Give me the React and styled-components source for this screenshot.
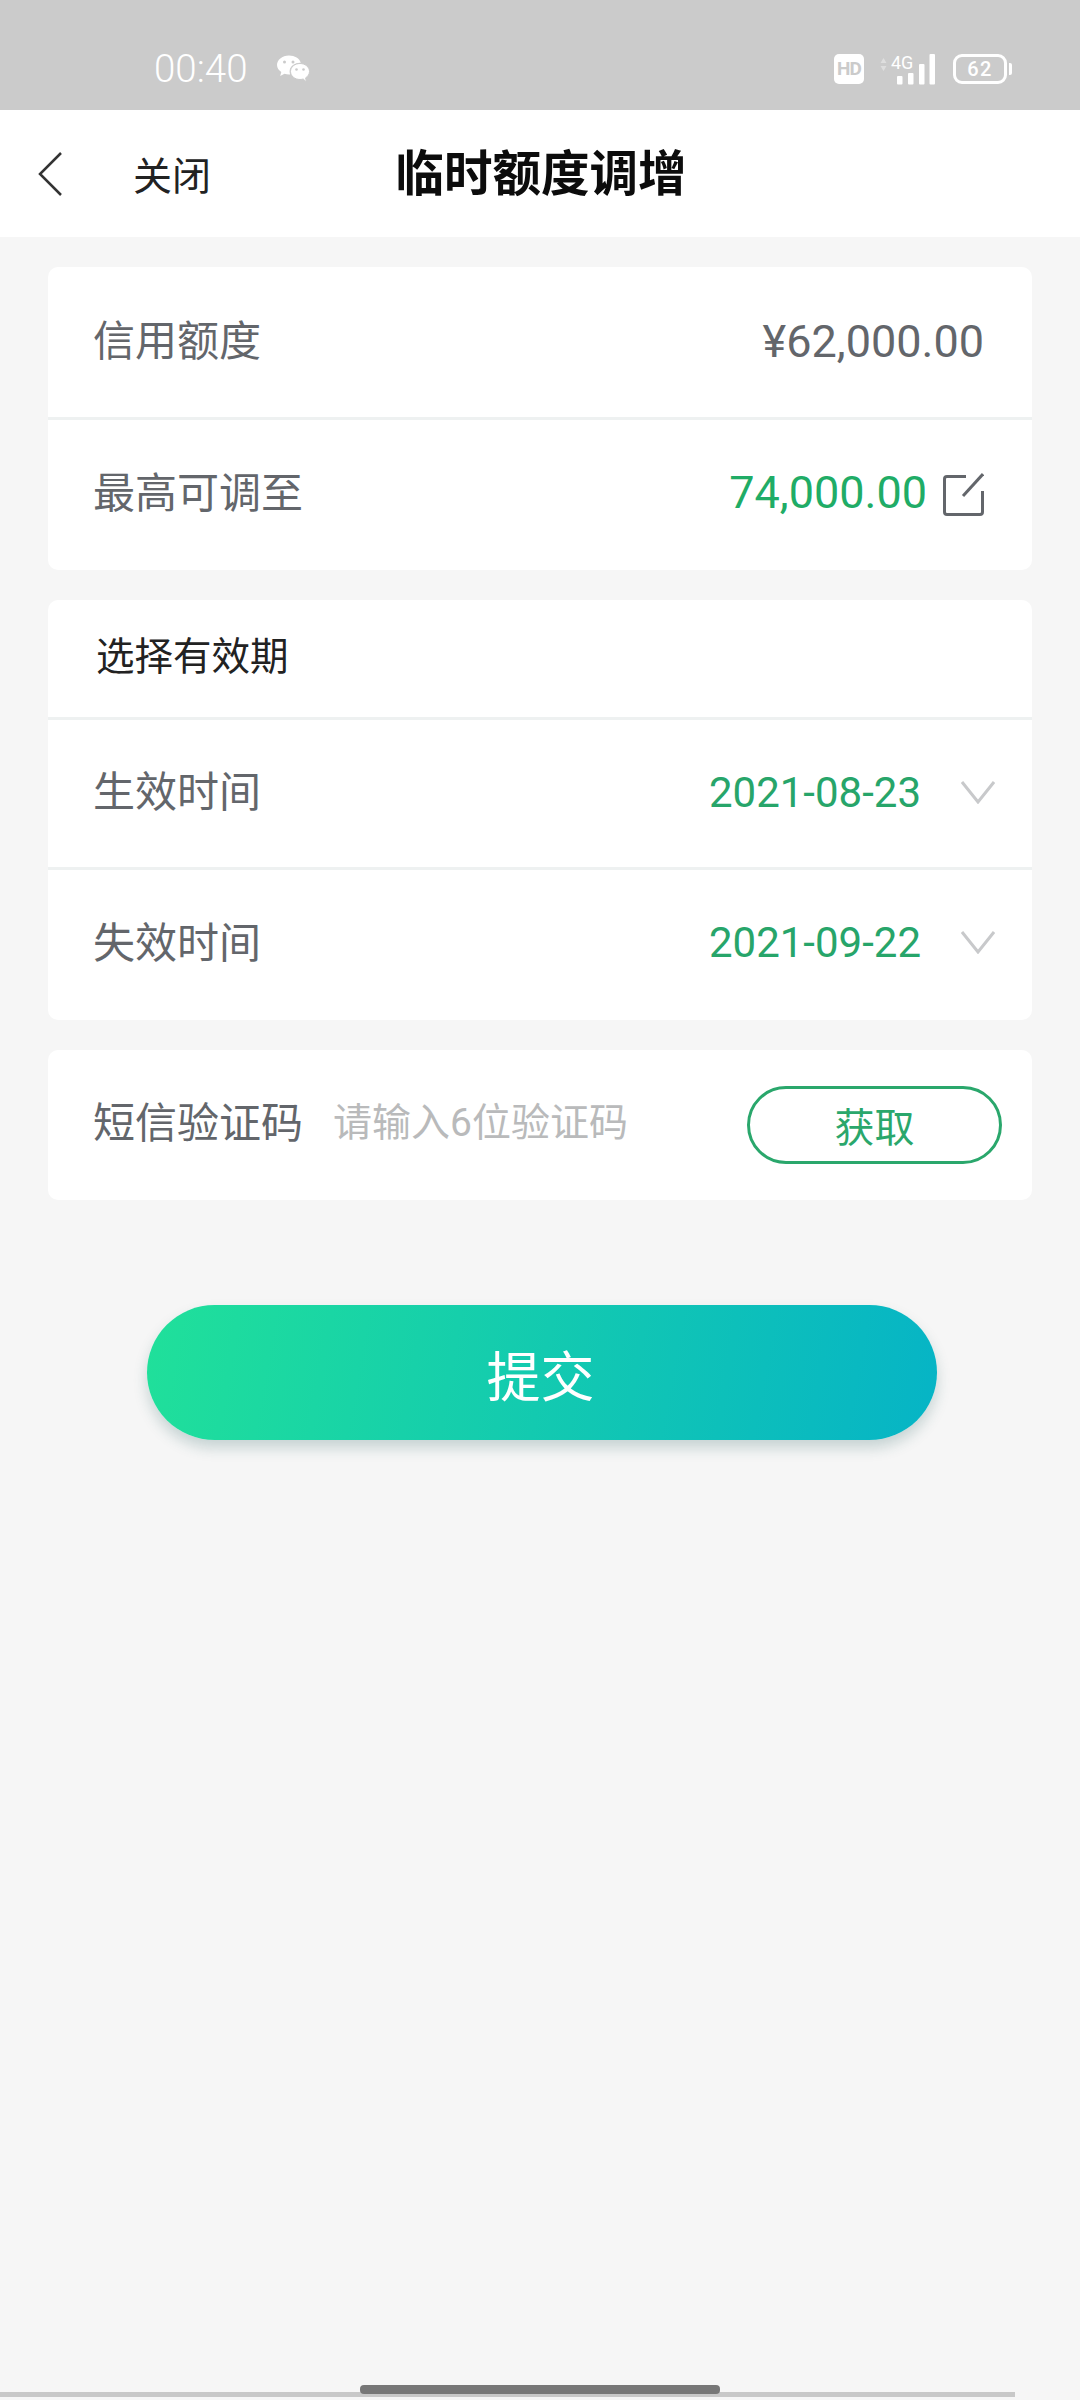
import styled, { createGlobalStyle } from "styled-components";

const GlobalStyle = createGlobalStyle`
  html, body {
    margin: 0;
    padding: 0;
    background: #f6f6f6;
  }
  * {
    box-sizing: border-box;
  }
`;

const FONT = `Roboto, "Noto Sans CJK SC", sans-serif`;

const WeChatIcon = () => (
  <svg width="34" height="28" viewBox="0 0 34 28">
    <path d="M13 0.500C6 0.500 1 5 1 10c0 3 1.700 5.300 4.300 7L4.200 21l4.300-2.200c1.400.4 2.900.7 4.500.7h1.200c-.4-1-.6-2-.6-3 0-5 4.800-8.800 10.400-8.800h.8C23.600 3.500 18.800 0.500 13 0.500z" fill="#fff" />
    <path d="M33.500 16.500c0-4.600-4.400-8-9.500-8s-9.500 3.400-9.500 8 4.400 8 9.500 8c1.100 0 2.200-.2 3.200-.5l3.300 3-.9-4.100c2.400-1.500 3.900-3.800 3.900-6.400z" fill="#fff" stroke="#cbcbcb" strokeWidth="1" />
    <circle cx="8.500" cy="7" r="1.500" fill="#cbcbcb" />
    <circle cx="17" cy="7" r="1.500" fill="#cbcbcb" />
    <circle cx="20.500" cy="14.500" r="1.300" fill="#cbcbcb" />
    <circle cx="27.500" cy="14.500" r="1.300" fill="#cbcbcb" />
  </svg>
);

const SignalIcon = () => (
  <svg width="55" height="42" viewBox="0 -6 55 42">
    <path d="M0.500 9l3-5 3 5zM0.500 12l3 5 3-5z" fill="#dedede" />
    <text x="11" y="15" fontFamily="Roboto, sans-serif" fontSize="18" fill="#fff">4G</text>
    <rect x="17" y="22" width="5.500" height="8.500" rx="1" fill="#fff" />
    <rect x="28" y="19" width="5.500" height="11.500" rx="1" fill="#fff" />
    <rect x="39" y="10" width="5.500" height="20.500" rx="1" fill="#fff" />
    <rect x="49.500" y="0" width="5.500" height="30.500" rx="1" fill="#fff" />
  </svg>
);

const BackIcon = () => (
  <svg width="26" height="46" viewBox="0 0 26 46">
    <path d="M24 2 L3 23 L24 44" fill="none" stroke="#333" strokeWidth="2.500" />
  </svg>
);

const EditIcon = () => (
  <svg width="41" height="43" viewBox="0 0 41 43">
    <path d="M23 3.500H4a2.500 2.500 0 0 0-2.500 2.500v33A2.500 2.500 0 0 0 4 41.500h33a2.500 2.500 0 0 0 2.500-2.500V18" fill="none" stroke="#63666b" strokeWidth="3" />
    <path d="M20 23 L40 1" fill="none" stroke="#63666b" strokeWidth="3" />
  </svg>
);

const ChevronIcon = () => (
  <svg width="34" height="23" viewBox="0 0 34 23">
    <path d="M1 1 L17 21 L33 1" fill="none" stroke="#c8c9cb" strokeWidth="3" />
  </svg>
);

export default function App() {
  return (
    <Page>
      <GlobalStyle />
      <StatusBar>
        <StatusLeft>
          <Clock>00:40</Clock>
          <WeChatIcon />
        </StatusLeft>
        <StatusRight>
          <HdBadge>HD</HdBadge>
          <SignalIcon />
          <Battery>
            <BatteryLevel>62</BatteryLevel>
            <BatteryCap />
          </Battery>
        </StatusRight>
      </StatusBar>

      <Header>
        <BackButton>
          <BackIcon />
        </BackButton>
        <CloseLink>关闭</CloseLink>
        <Title>临时额度调增</Title>
      </Header>

      <Content>
        <Card>
          <Row $height={153}>
            <Label>信用额度</Label>
            <Amount>¥62,000.00</Amount>
          </Row>
          <Row>
            <Label>最高可调至</Label>
            <RowEnd>
              <Amount $green>74,000.00</Amount>
              <EditSlot>
                <EditIcon />
              </EditSlot>
            </RowEnd>
          </Row>
        </Card>

        <Card>
          <SectionRow>选择有效期</SectionRow>
          <Row $chevron>
            <Label>生效时间</Label>
            <RowEnd $gap={40}>
              <DateValue>2021-08-23</DateValue>
              <ChevronIcon />
            </RowEnd>
          </Row>
          <Row $chevron>
            <Label>失效时间</Label>
            <RowEnd $gap={40}>
              <DateValue>2021-09-22</DateValue>
              <ChevronIcon />
            </RowEnd>
          </Row>
        </Card>

        <Card>
          <SmsRow>
            <Label>短信验证码</Label>
            <CodeInput placeholder="请输入6位验证码" />
            <GetButton>获取</GetButton>
          </SmsRow>
        </Card>
      </Content>

      <SubmitButton>提交</SubmitButton>

      <HomeTrack>
        <HomeBar />
      </HomeTrack>
    </Page>
  );
}

const Page = styled.div`
  position: relative;
  width: 1080px;
  height: 2400px;
  overflow: hidden;
  background: #f6f6f6;
  font-family: ${FONT};
`;

const StatusBar = styled.div`
  height: 110px;
  padding: 46px 69px 0 154px;
  background: #cbcbcb;
  display: flex;
  justify-content: space-between;
  align-items: flex-start;
`;

const StatusLeft = styled.div`
  display: flex;
  align-items: center;
  gap: 28px;
`;

const Clock = styled.span`
  font-size: 38.500px;
  line-height: 46px;
  font-weight: 300;
  color: #fff;
`;

const StatusRight = styled.div`
  display: flex;
  align-items: center;
  gap: 16px;
  height: 46px;
`;

const HdBadge = styled.span`
  width: 30px;
  height: 30px;
  border-radius: 5px;
  background: #fff;
  color: #cbcbcb;
  font-size: 19px;
  line-height: 30px;
  font-weight: 700;
  letter-spacing: -1px;
  text-align: center;
`;

const Battery = styled.div`
  position: relative;
  width: 54px;
  height: 30px;
  margin: 0 4px 0 2px;
  border: 3px solid #fff;
  border-radius: 9px;
  display: flex;
  align-items: center;
  justify-content: center;
`;

const BatteryLevel = styled.span`
  font-size: 20px;
  font-weight: 500;
  letter-spacing: 1.500px;
  color: #fff;
`;

const BatteryCap = styled.span`
  position: absolute;
  right: -8px;
  top: 6px;
  width: 3px;
  height: 12px;
  border-radius: 0 2px 2px 0;
  background: #fff;
`;

const Header = styled.header`
  position: relative;
  height: 127px;
  background: #fff;
  display: flex;
  align-items: center;
  padding-left: 37px;
`;

const BackButton = styled.span`
  display: flex;
  width: 96px;
`;

const CloseLink = styled.span`
  margin-bottom: 2px;
  font-size: 39px;
  color: #222;
`;

const Title = styled.h1`
  position: absolute;
  left: 0;
  right: 0;
  top: 0;
  margin: 0;
  padding-left: 2px;
  line-height: 130px;
  text-align: center;
  font-size: 48.500px;
  font-weight: 700;
  color: #0c0c0c;
`;

const Content = styled.main`
  display: flex;
  flex-direction: column;
  gap: 30px;
  padding: 30px 48px 0 48px;
`;

const Card = styled.section`
  background: #fff;
  border-radius: 10px;
  overflow: hidden;
`;

const Row = styled.div`
  height: ${({ $height = 150 }) => $height}px;
  padding: 0 ${({ $chevron }) => ($chevron ? "37px" : "48px")} 2px 45px;
  display: flex;
  align-items: center;
  justify-content: space-between;
  border-bottom: 3px solid #eef1f1;

  &:last-child {
    padding-bottom: 5px;
    border-bottom: none;
  }

  &:last-child > span:first-child {
    margin-bottom: 6px;
  }
`;

const SectionRow = styled.div`
  height: 120px;
  padding: 0 0 11px 48px;
  display: flex;
  align-items: center;
  font-size: 38.500px;
  color: #222;
  border-bottom: 3px solid #eef1f1;
`;

const Label = styled.span`
  margin-bottom: 8px;
  font-size: 42px;
  color: #63666b;
  white-space: nowrap;
`;

const RowEnd = styled.div`
  display: flex;
  align-items: center;
  gap: ${({ $gap = 16 }) => $gap}px;
`;

const EditSlot = styled.span`
  display: flex;
  margin-top: 3px;
`;

const Amount = styled.span`
  font-size: 45px;
  color: ${({ $green }) => ($green ? "#20ac66" : "#63666b")};
`;

const DateValue = styled.span`
  font-size: 42px;
  color: #27a56a;
`;

const SmsRow = styled.div`
  height: 150px;
  padding: 0 30px 4px 45px;
  display: flex;
  align-items: center;
`;

const CodeInput = styled.input`
  flex: 1;
  min-width: 0;
  margin-left: 30px;
  border: none;
  outline: none;
  padding: 0;
  background: transparent;
  font-family: ${FONT};
  font-size: 39px;

  &::placeholder {
    color: #b9babb;
    opacity: 1;
  }
`;

const GetButton = styled.button`
  width: 255px;
  height: 78px;
  margin-top: 4px;
  padding: 0;
  border: 3px solid #2aa76c;
  border-radius: 39px;
  background: #fff;
  color: #2aa76c;
  font-family: ${FONT};
  font-size: 40px;
`;

const SubmitButton = styled.button`
  display: block;
  width: 790px;
  height: 135px;
  margin: 105px 0 0 147px;
  padding: 2px 3px 0 0;
  border: none;
  border-radius: 68px;
  background: linear-gradient(100deg, #20e09a 0%, #06b4c6 100%);
  box-shadow: 0 8px 14px rgba(30, 90, 90, 0.22);
  color: #fff;
  font-family: ${FONT};
  font-size: 54px;
`;

const HomeTrack = styled.div`
  position: absolute;
  left: 0;
  bottom: 3px;
  width: 1015px;
  height: 5px;
  background: #c8c8c8;
`;

const HomeBar = styled.div`
  position: absolute;
  left: 360px;
  bottom: 3px;
  width: 360px;
  height: 9px;
  border-radius: 4px;
  background: #777;
`;
